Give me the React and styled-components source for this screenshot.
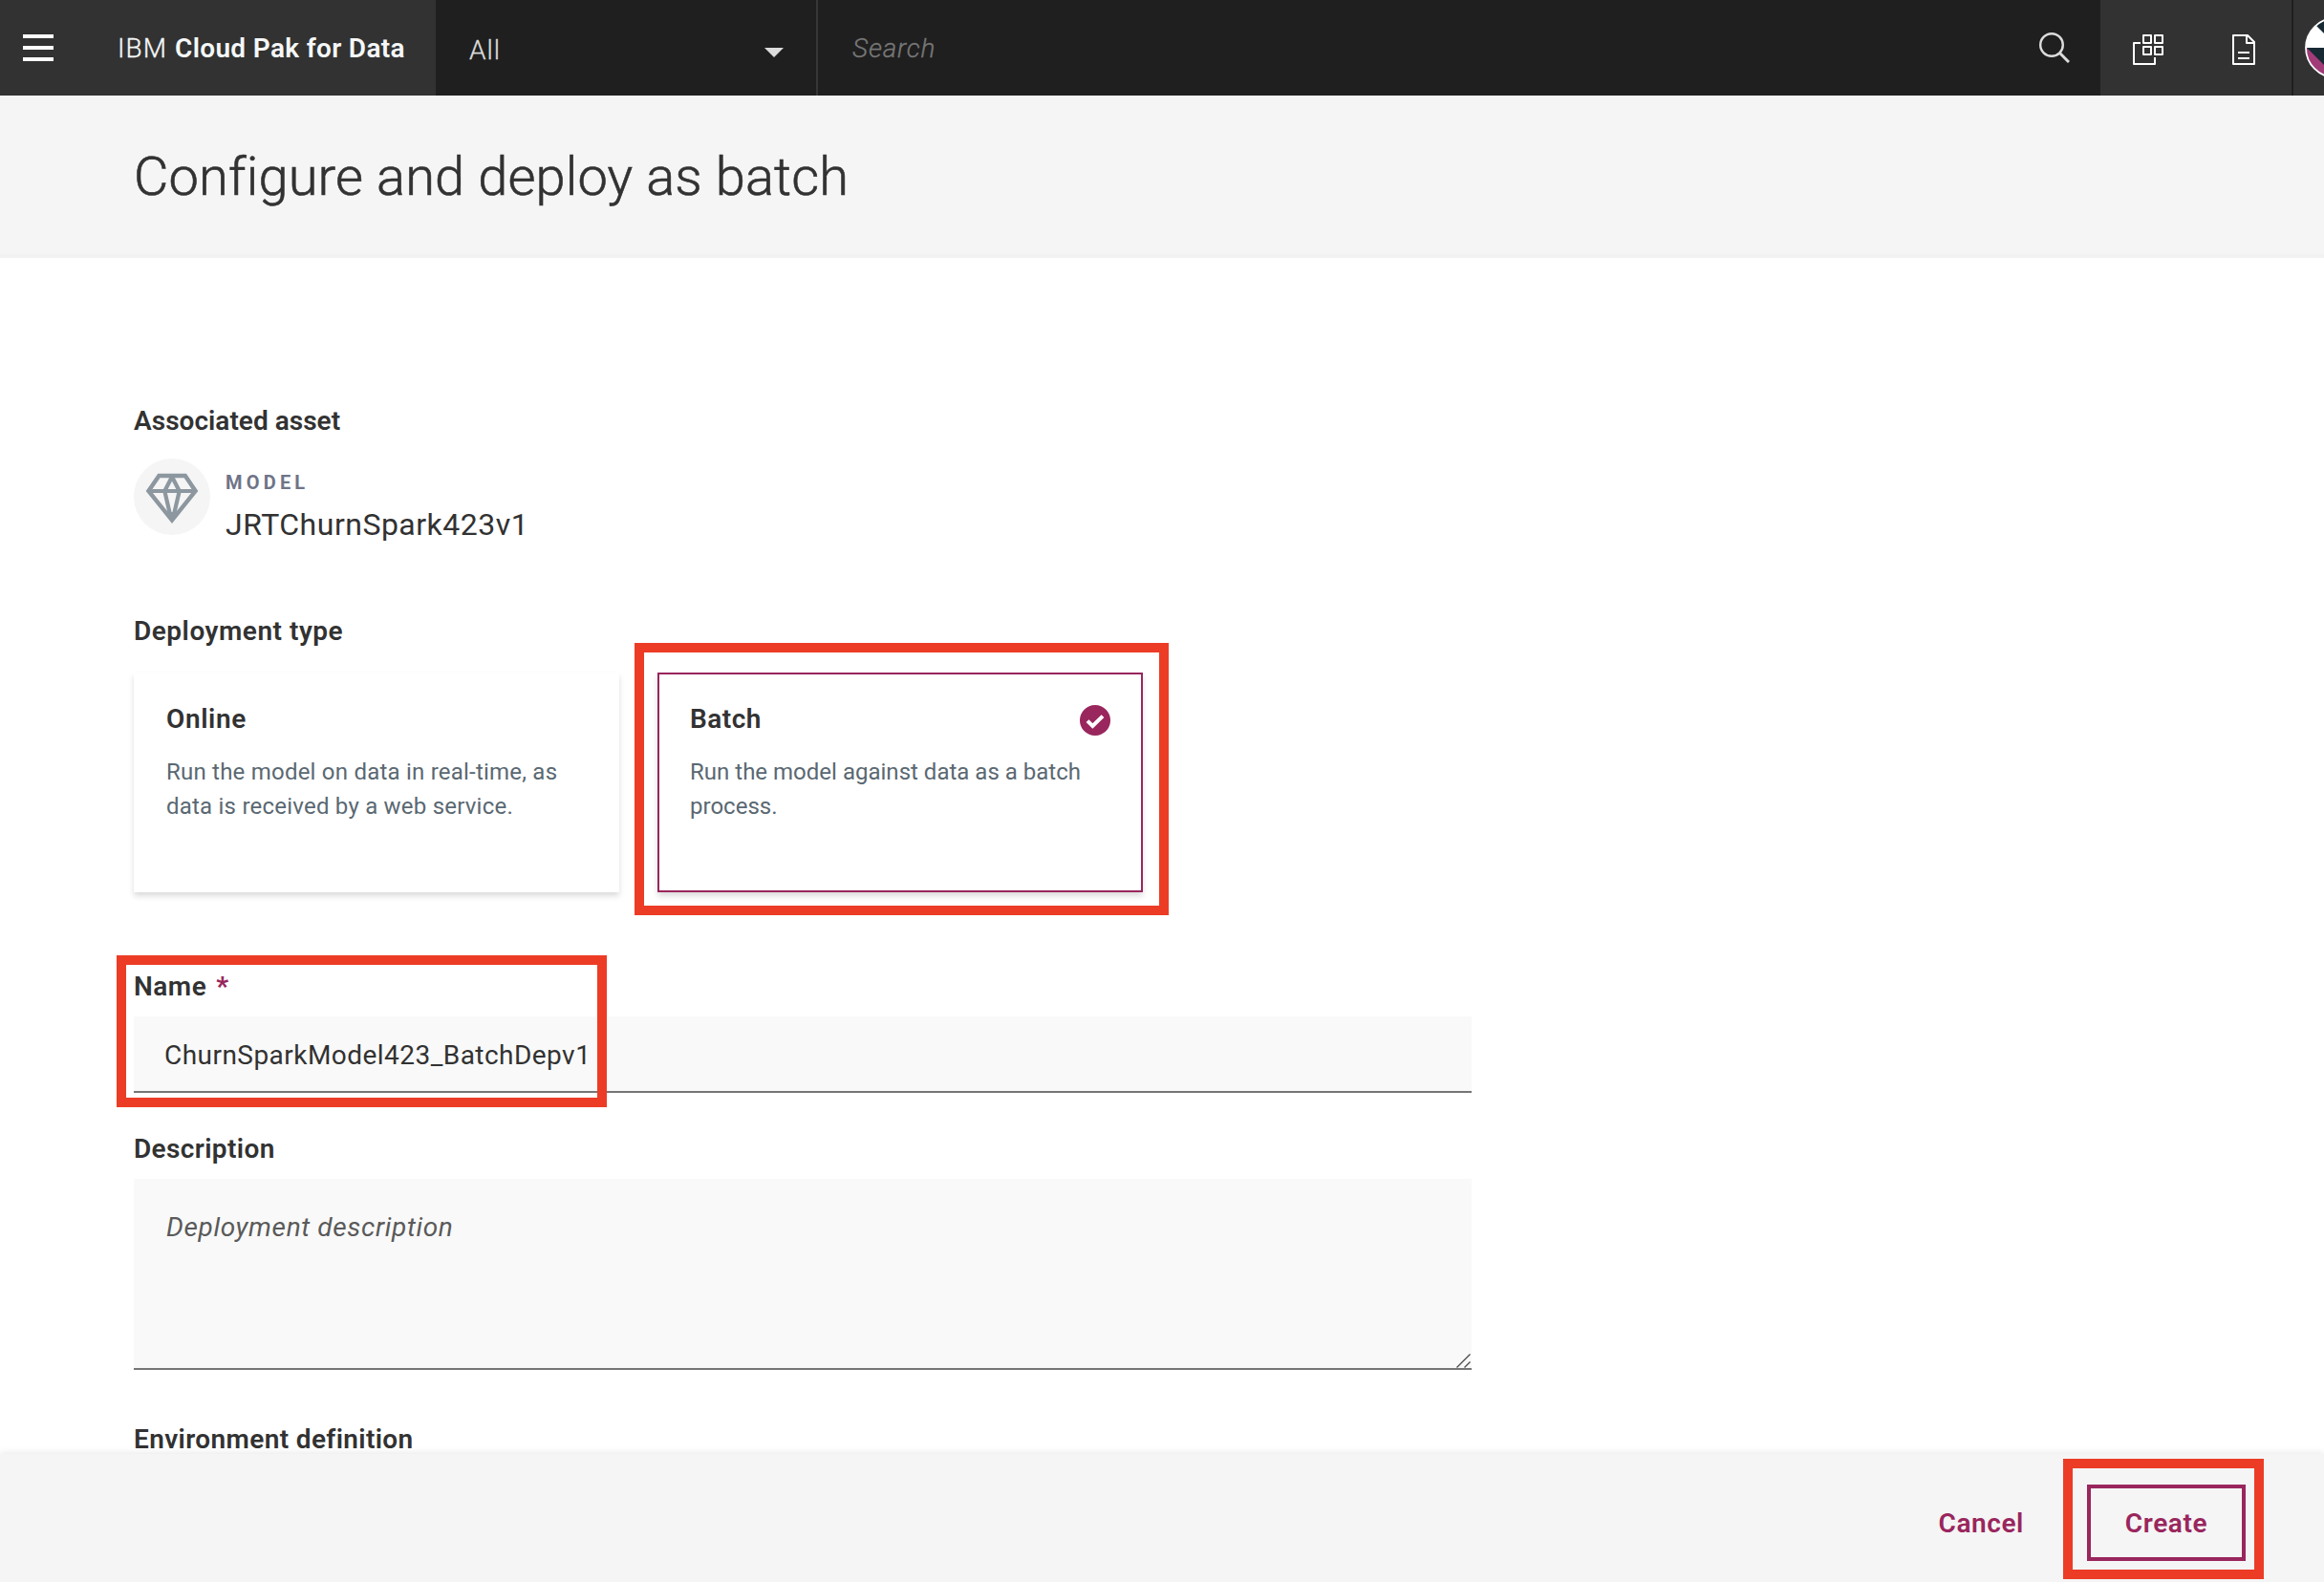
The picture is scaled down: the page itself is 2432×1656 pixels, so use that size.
import React from "react";
import styled, { createGlobalStyle, css } from "styled-components";

const color = {
  ink: "#323232",
  accent: "#99265d",
  highlight: "#ec3c26",
  surface: "#f5f5f5",
  field: "#f9f9f9",
  slate: "#5a6872",
};

const GlobalStyle = createGlobalStyle`
  *, *::before, *::after { box-sizing: border-box; }
  body {
    margin: 0;
    background: #fff;
    color: ${color.ink};
    font-family: Roboto, "Liberation Sans", sans-serif;
    overflow: hidden;
  }
`;

const Page = styled.div`
  display: flex;
  flex-direction: column;
  width: 2432px;
  height: 1656px;
  overflow: hidden;
`;

/* ---------- header ---------- */

const Header = styled.header`
  display: flex;
  flex: none;
  height: 100px;
  background: #1f1f1f;
  font-size: 28px;
  line-height: 36px;
`;

const Brand = styled.div`
  display: flex;
  align-items: center;
  width: 456px;
  padding-left: 24px;
  background: #323232;
  color: #f5f7f8;
`;

const MenuButton = styled.div`
  display: flex;
  flex-direction: column;
  gap: 8px;
  width: 32px;
  margin-right: 67px;
`;

const MenuBar = styled.span`
  height: 4px;
  background: #fff;
`;

const lightText = css`
  font-weight: 300;
  -webkit-text-stroke: 0.3px currentColor;
`;

const BrandPrefix = styled.span`
  ${lightText}
  width: 60px;
  padding-top: 2px;
  letter-spacing: 1px;
`;

const BrandName = styled.span`
  padding-top: 2px;
  font-weight: 600;
  letter-spacing: 0.33px;
  white-space: nowrap;
`;

const ScopeSelect = styled.div`
  ${lightText}
  display: flex;
  align-items: center;
  justify-content: space-between;
  width: 400px;
  padding: 5px 34px 0 35px;
  border-right: 2px solid #363636;
  color: #dcdcdc;
  letter-spacing: 1px;
`;

const Caret = styled.span`
  margin-top: 5px;
  border: 10px solid transparent;
  border-top-color: #dcdcdc;
  border-bottom: 0;
`;

const SearchField = styled.div`
  display: flex;
  flex: 1;
  align-items: center;
  justify-content: space-between;
  padding: 0 32px 0 36px;
`;

const SearchPlaceholder = styled.span`
  ${lightText}
  padding-top: 2px;
  color: #777;
  font-style: italic;
  letter-spacing: 0.8px;
`;

const HeaderTools = styled.div`
  display: flex;
  width: 234px;
  background: #323232;
`;

const ToolButton = styled.div`
  display: flex;
  align-items: center;
  justify-content: center;
  width: 100px;
  padding-top: 4px;
`;

const AvatarSlot = styled.div`
  display: flex;
  flex: 1;
  align-items: center;
  padding-left: 12px;
  border-left: 2px solid #1f1f1f;
  overflow: hidden;

  svg { flex: none; }
`;

/* ---------- page title ---------- */

const TitleBar = styled.div`
  flex: none;
  height: 170px;
  padding: 50px 0 0 140px;
  background: ${color.surface};
  border-bottom: 4px solid #f2f2f2;
`;

const Title = styled.h1`
  margin: 0;
  font-size: 56px;
  font-weight: 300;
  line-height: 70px;
  letter-spacing: 0.15px;
  -webkit-text-stroke: 0.6px currentColor;
`;

/* ---------- form ---------- */

const Form = styled.main`
  display: flex;
  flex: 1;
  flex-direction: column;
  min-height: 0;
  padding: 152px 0 0 140px;
  overflow: hidden;
`;

const Label = styled.div`
  flex: none;
  height: 36px;
  padding-top: 1px;
  font-size: 28px;
  font-weight: 600;
  line-height: 36px;
  letter-spacing: ${(p) => p.$tracking || 0.37}px;
  white-space: nowrap;
`;

const Required = styled.span`
  margin-left: 10px;
  color: ${color.accent};
  font-weight: 800;
`;

const Section = styled.section`
  display: flex;
  flex: none;
  flex-direction: column;
  gap: ${(p) => p.$gap}px;
  margin-bottom: ${(p) => p.$after}px;
`;

const Asset = styled.div`
  display: flex;
  gap: 16px;
  height: 80px;
`;

const AssetBadge = styled.div`
  flex: none;
  width: 80px;
  height: 80px;
  border-radius: 50%;
  background: ${color.surface};
`;

const AssetText = styled.div`
  display: flex;
  flex-direction: column;
  gap: 10px;
  padding-top: 11px;
`;

const AssetKind = styled.div`
  color: #6f7487;
  font-size: 20px;
  font-weight: 700;
  line-height: 28px;
  letter-spacing: 4.2px;
`;

const AssetName = styled.div`
  font-size: 32px;
  line-height: 40px;
  letter-spacing: 0.5px;
`;

const Cards = styled.div`
  display: flex;
  gap: 40px;
`;

const CardSlot = styled.div`
  position: relative;
`;

const Card = styled.div`
  display: flex;
  flex-direction: column;
  gap: 20px;
  width: 508px;
  height: 230px;
  padding: 28px 32px;
  border: 2px solid transparent;
  background: #fff;
  box-shadow: 0 4px 6px rgba(0, 0, 0, 0.14);
  ${(p) => p.$selected && css`border-color: ${color.accent};`}
`;

const CardHead = styled.div`
  display: flex;
  align-items: center;
  justify-content: space-between;
  height: 36px;

  svg { margin-top: 4px; }
`;

const CardText = styled.p`
  margin: 0;
  color: ${color.slate};
  font-size: 24px;
  line-height: 36px;
  letter-spacing: ${(p) => p.$tracking}px;
`;

const Highlight = styled.div`
  position: absolute;
  top: ${(p) => p.$top}px;
  left: ${(p) => p.$left}px;
  width: ${(p) => p.$width}px;
  height: ${(p) => p.$height}px;
  border: 10px solid ${color.highlight};
  pointer-events: none;
`;

const Field = styled(Section)`
  position: relative;
  width: 1400px;
`;

const TextInput = styled.div`
  display: flex;
  height: 80px;
  padding: 23px 32px 0 32px;
  border-bottom: 2px solid #767676;
  background: ${color.field};
  font-size: 28px;
  line-height: 36px;
  letter-spacing: 0.46px;
`;

const TextArea = styled.div`
  display: flex;
  align-items: flex-end;
  justify-content: space-between;
  height: 200px;
  padding-right: 1px;
  border-bottom: 2px solid #767676;
  background: ${color.field};
`;

const Placeholder = styled.span`
  align-self: flex-start;
  padding: 33px 0 0 34px;
  color: #5a5a5a;
  font-size: 28px;
  font-style: italic;
  line-height: 36px;
  letter-spacing: 0.65px;
`;

/* ---------- footer ---------- */

const Footer = styled.footer`
  position: relative;
  display: flex;
  flex: none;
  align-items: flex-start;
  justify-content: flex-end;
  gap: 66px;
  height: 134px;
  padding: 32px 82px 0 0;
  background: ${color.surface};
  box-shadow: 0 -2px 6px rgba(0, 0, 0, 0.08);
`;

const Button = styled.div`
  display: flex;
  position: relative;
  align-items: center;
  justify-content: center;
  height: 80px;
  padding-top: 1px;
  color: ${color.accent};
  font-size: 28px;
  font-weight: 600;
  line-height: 36px;
  letter-spacing: 0.6px;
  ${(p) => p.$outlined && css`
    width: 166px;
    border: 4px solid ${color.accent};
  `}
`;

/* ---------- icons ---------- */

const SearchIcon = () => (
  <svg width="32" height="32" viewBox="0 0 32 32" fill="none" stroke="#dcdcdc">
    <circle cx="13" cy="13" r="11.8" strokeWidth="2.4" />
    <path d="M21.5 21.5L31 31" strokeWidth="3" />
  </svg>
);

const AppsIcon = () => (
  <svg width="32" height="32" viewBox="0 0 32 32" fill="none" stroke="#fff" strokeWidth="2" strokeLinejoin="round">
    <rect x="11" y="1" width="8" height="8" />
    <rect x="23" y="1" width="8" height="8" />
    <rect x="11" y="13" width="8" height="8" />
    <rect x="23" y="13" width="8" height="8" />
    <path d="M8 9H1V31H23V24" />
  </svg>
);

const DocumentIcon = () => (
  <svg width="24" height="32" viewBox="0 0 24 32" fill="none" stroke="#fff" strokeWidth="2" strokeLinejoin="round">
    <path d="M1 1H16L23 8V31H1Z" />
    <path d="M15 1V9H23" />
    <path d="M6 19H18M6 25H18" />
  </svg>
);

const Avatar = () => (
  <svg width="64" height="64" viewBox="0 0 64 64">
    <clipPath id="avatar-disc"><circle cx="32" cy="32" r="31" /></clipPath>
    <g clipPath="url(#avatar-disc)">
      <rect width="64" height="64" fill="#172a34" />
      <path d="M0 9H12L35 32H0Z" fill="#fff" />
      <path d="M2 32L32 62H0V32Z" fill="#a13c79" />
    </g>
    <circle cx="32" cy="32" r="31" fill="none" stroke="#fff" strokeWidth="1.8" />
  </svg>
);

const DiamondIcon = () => (
  <svg width="80" height="80" viewBox="0 0 80 80" fill="none" stroke="#8c979f">
    <path d="M26.4 18H53.8L64.6 34L40 64.6L15.4 34Z" strokeWidth="4.4" />
    <path d="M15 34H65" strokeWidth="4.2" />
    <path d="M40 19L32.3 34L38.8 62M40 19L47.7 34L41.2 62" strokeWidth="4.2" />
    <path d="M33 56H47L40 66Z" fill="#8c979f" stroke="none" />
  </svg>
);

const CheckIcon = () => (
  <svg width="32" height="32" viewBox="0 0 32 32">
    <circle cx="16" cy="16" r="16" fill={color.accent} />
    <path d="M8 16.6L13.4 22L24 11.6" fill="none" stroke="#fff" strokeWidth="4" />
  </svg>
);

const ResizeGrip = () => (
  <svg width="15" height="15" viewBox="0 0 15 15" fill="none" stroke="#4c4c4c" strokeWidth="1.4">
    <path d="M0.5 14.5L14.5 0.5M8.5 14.5L14.5 8.5" />
  </svg>
);

export default function App() {
  return (
    <Page>
      <GlobalStyle />
      <Header>
        <Brand>
          <MenuButton><MenuBar /><MenuBar /><MenuBar /></MenuButton>
          <BrandPrefix>IBM</BrandPrefix>
          <BrandName>Cloud Pak for Data</BrandName>
        </Brand>
        <ScopeSelect>All<Caret /></ScopeSelect>
        <SearchField>
          <SearchPlaceholder>Search</SearchPlaceholder>
          <SearchIcon />
        </SearchField>
        <HeaderTools>
          <ToolButton><AppsIcon /></ToolButton>
          <ToolButton><DocumentIcon /></ToolButton>
          <AvatarSlot><Avatar /></AvatarSlot>
        </HeaderTools>
      </Header>

      <TitleBar><Title>Configure and deploy as batch</Title></TitleBar>

      <Form>
        <Section $gap={22} $after={82}>
          <Label $tracking={0.02}>Associated asset</Label>
          <Asset>
            <AssetBadge><DiamondIcon /></AssetBadge>
            <AssetText>
              <AssetKind>MODEL</AssetKind>
              <AssetName>JRTChurnSpark423v1</AssetName>
            </AssetText>
          </Asset>
        </Section>

        <Section $gap={26} $after={80}>
          <Label $tracking={0.52}>Deployment type</Label>
          <Cards>
            <CardSlot>
              <Card>
                <CardHead><Label $tracking={0.6}>Online</Label></CardHead>
                <CardText $tracking={0.22}>
                  Run the model on data in real-time, as data is received by a web service.
                </CardText>
              </Card>
            </CardSlot>
            <CardSlot>
              <Card $selected>
                <CardHead><Label $tracking={0.5}>Batch</Label><CheckIcon /></CardHead>
                <CardText $tracking={0.01}>
                  Run the model against data as a batch process.
                </CardText>
              </Card>
              <Highlight $top={-31} $left={-24} $width={559} $height={285} />
            </CardSlot>
          </Cards>
        </Section>

        <Field $gap={14} $after={40}>
          <Label $tracking={0.5}>Name<Required>*</Required></Label>
          <TextInput>ChurnSparkModel423_BatchDepv1</TextInput>
          <Highlight $top={-14} $left={-18} $width={513} $height={159} />
        </Field>

        <Field $gap={14} $after={54}>
          <Label>Description</Label>
          <TextArea>
            <Placeholder>Deployment description</Placeholder>
            <ResizeGrip />
          </TextArea>
        </Field>

        <Label>Environment definition</Label>
      </Form>

      <Footer>
        <Button>Cancel</Button>
        <Button $outlined>
          Create
          <Highlight $top={-31} $left={-29} $width={210} $height={126} />
        </Button>
      </Footer>
    </Page>
  );
}
